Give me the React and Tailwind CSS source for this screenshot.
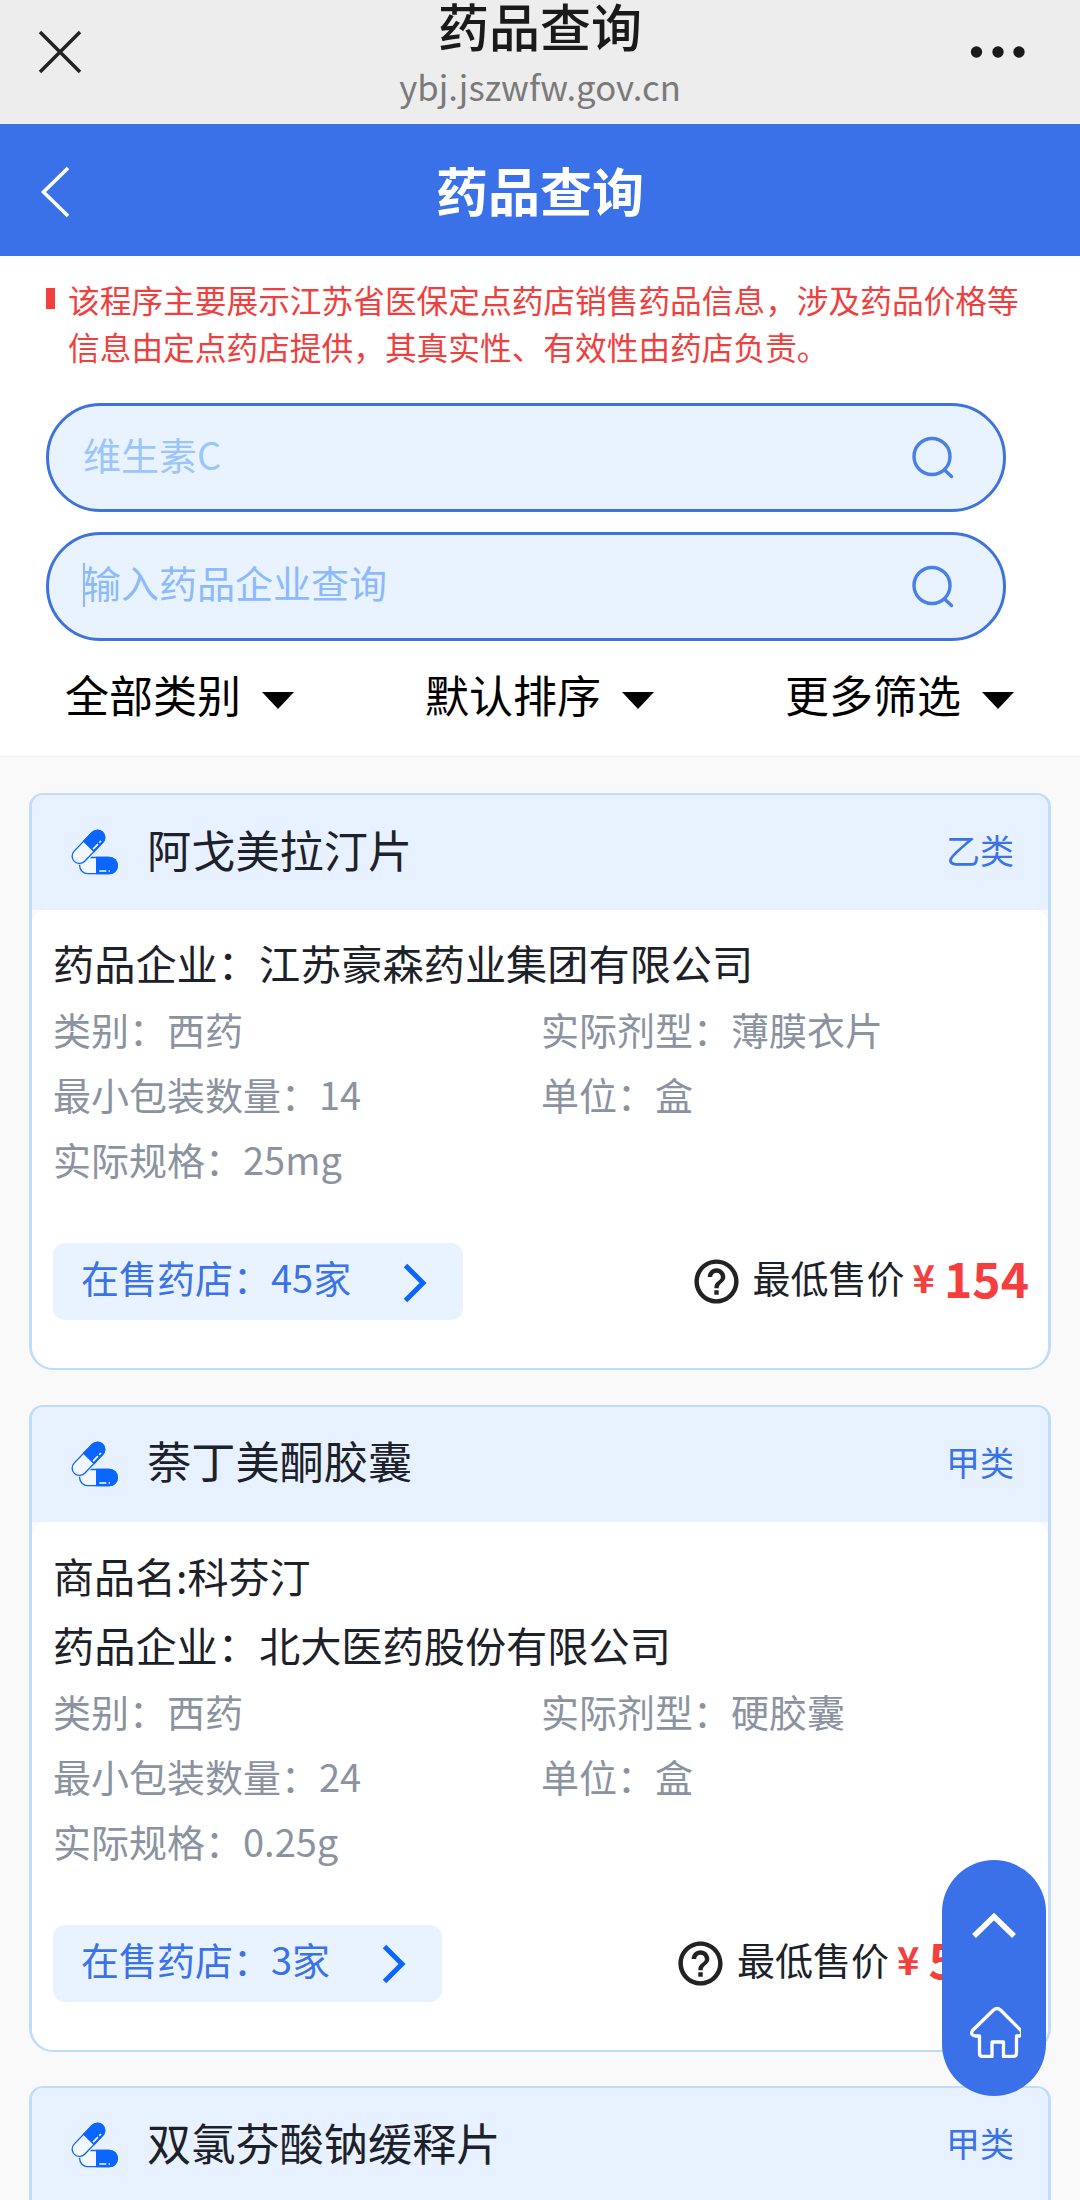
import { MdHelpOutline } from "react-icons/md";

const medicamentos = [
  {
    id: 1,
    nombre: "阿戈美拉汀片",
    tipo: "乙类",
    empresa: "江苏豪森药业集团有限公司",
    categoria: "西药",
    forma: "薄膜衣片",
    cantidad: "14",
    unidad: "盒",
    especificacion: "25mg",
    farmacias: 45,
    precio: "154",
  },
  {
    id: 2,
    nombre: "萘丁美酮胶囊",
    tipo: "甲类",
    marca: "科芬汀",
    empresa: "北大医药股份有限公司",
    categoria: "西药",
    forma: "硬胶囊",
    cantidad: "24",
    unidad: "盒",
    especificacion: "0.25g",
    farmacias: 3,
    precio: "59.6",
  },
  {
    id: 3,
    nombre: "双氯芬酸钠缓释片",
    tipo: "甲类",
  },
];

const filtros = ["全部类别", "默认排序", "更多筛选"];

const IconoPastillas = () => (
  <svg viewBox="60 55 150 142" className="w-[50px] h-[47px] shrink-0">
    {/* cápsula inferior */}
    <path
      d="M113 141H178a24.5 24.5 0 0 1 0 49H113a24.5 24.5 0 0 1 0-49z"
      fill="#f3f8ff"
      stroke="#0a66ff"
      strokeWidth="4"
    />
    <path d="M138 139h40a26.5 26.5 0 0 1 0 53h-40z" fill="#0a66ff" />
    <path d="M148 182h21M176 182h4" stroke="#fff" strokeWidth="5" />
    {/* cápsula superior */}
    <g transform="rotate(-46 115 109)">
      <rect x="50" y="82" width="130" height="54" rx="27" fill="#e7f1ff" />
      <rect
        x="54"
        y="87"
        width="122"
        height="44"
        rx="22"
        fill="#f3f8ff"
        stroke="#0a66ff"
        strokeWidth="4"
      />
      <path d="M115 85h40a24 24 0 0 1 0 48h-40z" fill="#0a66ff" />
      <path d="M120 124h21M147 124h7" stroke="#fff" strokeWidth="5" />
    </g>
  </svg>
);

const IconoBuscar = () => (
  <svg
    viewBox="0 0 44 44"
    className="w-11 h-11 -mt-0.5"
    fill="none"
    stroke="#4a7fe6"
    strokeWidth="3.4"
    strokeLinecap="round"
  >
    <circle cx="22" cy="21.5" r="18" />
    <path d="M34.500 35l7 6.500" />
  </svg>
);

const Buscador = ({ children }) => (
  <div className="w-[960px] h-[109px] rounded-full border-3 border-[#3f73dc] bg-[#e8f3ff] pl-[34px] pr-[49px] flex items-center justify-between">
    {children}
    <IconoBuscar />
  </div>
);

const Detalle = ({ item }) => (
  <div className="bg-white rounded-t-[14px] pt-[18px] pb-12 px-[21px]">
    {item.marca && (
      <div className="h-[70px] leading-[70px] text-[41px] text-[#1d2129]">
        商品名:{item.marca}
      </div>
    )}
    <div className="h-[69px] leading-[69px] text-[41.2px] text-[#1d2129]">
      药品企业：{item.empresa}
    </div>
    <div className="grid grid-cols-2 text-[38px] leading-[65px] text-[#8a939f] -mt-px">
      <span>类别：{item.categoria}</span>
      <span className="pl-px">实际剂型：{item.forma}</span>
      <span>最小包装数量：{item.cantidad}</span>
      <span className="pl-px">单位：{item.unidad}</span>
      <span>实际规格：{item.especificacion}</span>
    </div>
    <div className="mt-[52px] h-[77px] flex items-center justify-between">
      <button className="h-[77px] rounded-xl bg-[#e8f3ff] pl-7 pr-9 flex items-center text-[38px] text-[#3a72e8]">
        <span className="leading-[60px] -mt-[9px]">
          在售药店：{item.farmacias}家
        </span>
        <svg
          viewBox="0 0 24 40"
          className="w-6 h-10 ml-[52px] mt-0.5"
          fill="none"
          stroke="#0a66ff"
          strokeWidth="5"
        >
          <path d="M2.500 2.500l17.500 17.500-17.500 17.500" />
        </svg>
      </button>
      <div className="flex items-center -mr-0.5">
        <MdHelpOutline className="w-[53px] h-[53px] text-[#222]" />
        <span className="ml-[10px] text-[38px] leading-[60px] text-[#1d2129] -mt-[9px]">
          最低售价
        </span>
        <span className="ml-[8px] text-[38px] leading-[60px] font-bold text-[#f53f3f] -mt-[9px]">
          ¥
        </span>
        <span className="ml-[9px] text-[48px] leading-[60px] font-bold text-[#f53f3f] -mt-[10px]">
          {item.precio}
        </span>
      </div>
    </div>
  </div>
);

const Tarjeta = ({ item }) => (
  <div className="shrink-0 min-h-[160px] rounded-t-[14px] rounded-b-[24px] border-x-3 border-y-2 border-[#c0dcfb] overflow-hidden bg-[#f9f9f9]">
    <div className="h-[115px] bg-[#e7f1ff] flex items-center pl-[38px] pr-[34px]">
      <IconoPastillas />
      <span className="ml-[27px] flex-1 text-[44.2px] leading-[60px] text-[#1d2129] -mt-2">
        {item.nombre}
      </span>
      <span className="text-[34px] leading-[48px] text-[#3a72e8] -mt-[5px]">
        {item.tipo}
      </span>
    </div>
    {item.empresa && <Detalle item={item} />}
  </div>
);

const App = () => {
  return (
    <div className="relative w-[1080px] h-[2200px] overflow-hidden bg-[#f9f9f9] font-['Noto_Sans_CJK_SC',sans-serif]">
      <header className="h-[124px] bg-[#ededed] flex justify-between px-[38px]">
        <svg
          viewBox="0 0 44 44"
          className="w-11 h-11 mt-[30px]"
          stroke="#222"
          strokeWidth="3.5"
        >
          <path d="M2 2l40 40M42 2L2 42" />
        </svg>
        <div className="flex flex-col items-center pl-[28px]">
          <h1 className="text-[51px] leading-[51px] font-medium text-[#1a1a1a]">
            药品查询
          </h1>
          <p className="mt-[10px] text-[34.7px] leading-[50px] text-[#7a7a7a]">
            ybj.jszwfw.gov.cn
          </p>
        </div>
        <svg viewBox="0 0 56 14" className="w-14 h-[14px] mt-[45px] mr-4" fill="#1a1a1a">
          <circle cx="6.5" cy="7" r="5.7" />
          <circle cx="28" cy="7" r="5.7" />
          <circle cx="49" cy="7" r="5.7" />
        </svg>
      </header>

      <nav className="h-[132px] bg-[#3a71e8] flex items-center px-10">
        <svg
          viewBox="0 0 30 52"
          className="w-[30px] h-[52px] mt-1"
          fill="none"
          stroke="#fff"
          strokeWidth="3.6"
        >
          <path d="M28 2L3.500 26 28 50" />
        </svg>
        <h2 className="flex-1 pr-[30px] text-center text-[52px] leading-[70px] font-bold text-white">
          药品查询
        </h2>
      </nav>

      <section className="h-[501px] bg-white border-b border-[#f2f2f2]">
        <div className="flex pl-[46px] pt-5">
          <span className="w-[9px] h-[21px] bg-[#f53f3f] mt-3 mr-[13px] shrink-0" />
          <p className="text-[31.7px] leading-[47px] text-[#f0403e] whitespace-nowrap">
            该程序主要展示江苏省医保定点药店销售药品信息，涉及药品价格等
            <br />
            信息由定点药店提供，其真实性、有效性由药店负责。
          </p>
        </div>
        <div className="mt-[33px] ml-[46px] flex flex-col gap-5">
          <Buscador>
            <span className="text-[38px] leading-[60px] text-[#9cc5fb] -mt-2">
              维生素C
            </span>
          </Buscador>
          <Buscador>
            <span className="relative text-[38px] leading-[60px] text-[#8cbafc] -mt-2.5">
              <span className="absolute left-0 top-[11px] w-0.5 h-11 bg-[#8cbafc]" />
              输入药品企业查询
            </span>
          </Buscador>
        </div>
        <div className="mt-[23px] grid grid-cols-3">
          {filtros.map((filtro) => (
            <div key={filtro} className="flex items-center justify-center">
              <span className="text-[44px] leading-[60px] text-black">
                {filtro}
              </span>
              <svg viewBox="0 0 32 17" className="w-8 h-[17px] ml-[21px] mr-px mt-[13px]">
                <path d="M0 0h32L16 17z" />
              </svg>
            </div>
          ))}
        </div>
      </section>

      <main className="flex flex-col gap-[34.5px] pt-9 px-[29px]">
        {medicamentos.map((item) => (
          <Tarjeta key={item.id} item={item} />
        ))}
      </main>

      <div className="absolute left-[942px] top-[1860px] w-[104px] h-[236px] rounded-full bg-[#3a71e8] flex flex-col items-center">
        <svg
          viewBox="0 0 46 30"
          className="w-[46px] h-[30px] mt-[51px]"
          fill="none"
          stroke="#fff"
          strokeWidth="5.5"
        >
          <path d="M3 25L23 5.500l20 19.500" />
        </svg>
        <svg
          viewBox="0 0 52 53"
          className="w-[52px] h-[53px] mt-[64px] ml-[1px]"
          fill="none"
          stroke="#fff"
          strokeWidth="3.3"
          strokeLinejoin="round"
        >
          <path d="M24.500 5q3.500-3 7 0L52 25.500q2 5-2 5.500h-2.500v17q0 3.500-3.500 3.500h-9.500V37H23v14.500h-9q-3.500 0-3.500-3.500V31H6q-5-1-2.500-5.500z" />
        </svg>
      </div>
    </div>
  );
};

export default App;
